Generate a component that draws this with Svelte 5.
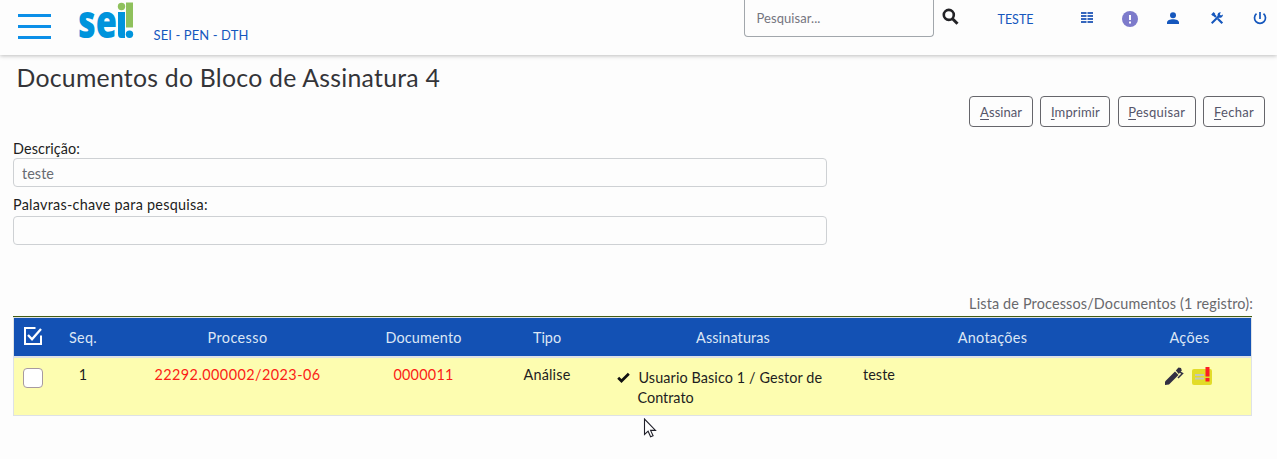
<script>
  const buttons = [
    { key: 'A', rest: 'ssinar', width: 64, spacing: 0.05 },
    { key: 'I', rest: 'mprimir', width: 70, spacing: 0.13 },
    { key: 'P', rest: 'esquisar', width: 78, spacing: 0.28 },
    { key: 'F', rest: 'echar', width: 62, spacing: 0.28 }
  ];
  const columns = [
    { title: 'Seq.', spacing: 0.3 },
    { title: 'Processo', spacing: 0.43 },
    { title: 'Documento', spacing: 0.16 },
    { title: 'Tipo', spacing: 0 },
    { title: 'Assinaturas', spacing: 0.14 },
    { title: 'Anotações', spacing: 0.3 },
    { title: 'Ações', spacing: 0.35 }
  ];
</script>

<header>
  <button class="menu" aria-label="Menu"><span></span><span></span><span></span></button>
  <svg class="logo" width="57" height="55" viewBox="0 0 57 55" role="img" aria-label="sei!">
    <text x="0" y="38" textLength="39" lengthAdjust="spacingAndGlyphs">se</text>
    <path d="M40 12h7v26h-4q-3 0-3-4z" fill="#0094dc" />
    <circle cx="43.5" cy="6.5" r="3.7" fill="#8fc15c" />
    <path d="M48 2.5h7v25h-7z" fill="#8fc15c" />
    <circle cx="51.5" cy="34.3" r="3.7" fill="#0094dc" />
  </svg>
  <span class="unit">SEI - PEN - DTH</span>
  <div class="search">Pesquisar...</div>
  <svg class="lens" width="17" height="17" viewBox="0 0 17 17">
    <circle cx="6.8" cy="6.9" r="5" fill="none" stroke="#222226" stroke-width="2.6" />
    <path d="M10.5 10.8l5 5" stroke="#222226" stroke-width="3" />
  </svg>
  <span class="user">TESTE</span>
  <nav>
    <svg width="20" height="20" viewBox="0 0 20 20">
      <path d="M4 4h5.5v2H4zM10.500 4H16v2h-5.500zM4 7h5.500v2H4zM10.500 7H16v2h-5.500zM4 10h5.500v2H4zM10.500 10H16v2h-5.500zM4 13h5.500v2H4zM10.500 13H16v2h-5.500z" fill="#3566bd" />
    </svg>
    <svg width="20" height="20" viewBox="0 0 20 20">
      <circle cx="10" cy="11" r="8" fill="#7d7bcb" />
      <path d="M9 7h2v5H9zM9 13.500h2v2H9z" fill="#fff" />
    </svg>
    <svg width="20" height="20" viewBox="0 0 20 20">
      <circle cx="10" cy="7.200" r="3" fill="#1557bd" />
      <path d="M4 16v-1.500c0-4.500 12-4.500 12 0V16z" fill="#1557bd" />
    </svg>
    <svg width="20" height="20" viewBox="0 0 20 20">
      <path d="M4.700 15.300L12.500 7.500" stroke="#1557bd" stroke-width="2" />
      <path d="M13.800 4.200l-1 2.200 1.200 1.200 2-1a3 3 0 0 1-4.200 2.900L10.700 8.300a3 3 0 0 1 3.100-4.100z" fill="#1557bd" />
      <path d="M6 6l3 3M10.800 10.800l4.500 4.500" stroke="#1557bd" stroke-width="2.200" />
      <path d="M4.200 6.500l2.400-2.400 1.800 2-2.200 2.200z" fill="#1557bd" />
    </svg>
    <svg width="20" height="20" viewBox="0 0 20 20">
      <path d="M6.500 5.700a5.500 5.500 0 1 0 7 0M10 4v7" fill="none" stroke="#1557bd" stroke-width="1.700" />
    </svg>
  </nav>
</header>

<main>
  <h1>Documentos do Bloco de Assinatura 4</h1>
  <div class="commands">
    {#each buttons as b}
      <button style:width="{b.width}px" style:letter-spacing="{b.spacing}px"><u>{b.key}</u>{b.rest}</button>
    {/each}
  </div>
  <section class="fields">
    <label for="desc" class="desc">Descrição:</label>
    <input id="desc" value="teste" disabled />
    <label for="words" class="words">Palavras-chave para pesquisa:</label>
    <input id="words" disabled />
  </section>
  <p class="caption">Lista de Processos/Documentos (1 registro):</p>
  <div class="table">
    <div class="row head">
      <div class="pick">
        <svg width="20" height="20" viewBox="0 0 20 20" fill="none" stroke="#fff">
          <path d="M12.500 2H2v16h16V9.500" stroke-width="2" />
          <path d="M5 9l4 4.200L18 3" stroke-width="2.300" />
        </svg>
      </div>
      {#each columns as c}
        <div><span style:letter-spacing="{c.spacing}px">{c.title}</span></div>
      {/each}
    </div>
    <div class="row body">
      <div class="pick"><span class="box"></span></div>
      <div>1</div>
      <div class="red process">22292.000002/2023-06</div>
      <div class="red number">0000011</div>
      <div class="kind">Análise</div>
      <div class="signers">
        <svg width="13" height="11" viewBox="0 0 13 11">
          <path d="M1.200 5.700l3.300 3.300L11.800 1.700" fill="none" stroke="#111" stroke-width="2.700" />
        </svg>
        <p><span class="first">Usuario Basico 1 / Gestor de</span><br /><span class="second">Contrato</span></p>
      </div>
      <div class="note">teste</div>
      <div class="actions">
        <svg width="20" height="20" viewBox="0 0 20 20">
          <path d="M1 15.500L11 5.500l3.500 3.500L5 18.500 1 19z" fill="#322f42" />
          <path d="M11.800 4.500L14.500 1.500l2.500.5 .8 2.500-3 3.500z" fill="#322f42" />
          <path d="M16 6.200l2.500 1.300-4.500 4.500" fill="none" stroke="#322f42" stroke-width="1.500" />
        </svg>
        <svg width="22" height="20" viewBox="0 0 22 20">
          <rect x="1" y="3" width="20" height="16" rx="2" fill="#e2dc29" />
          <path d="M4 8h9v2H4zM4 11.500h9v2H4z" fill="#c3c6b8" />
          <path d="M14.500 1h4v9.500h-4zM14.500 12h4v3.500h-4z" fill="#fb1d24" />
        </svg>
      </div>
    </div>
  </div>
</main>

<svg class="cursor" width="14" height="20" viewBox="0 0 14 20">
  <path d="M1.500 1v15.500l3.600-3.300 2.500 5.600 2.500-1.100-2.500-5.300h4.900z" fill="#fff" stroke="#20202a" stroke-width="1.100" />
</svg>

<style>
  :global(body) { background: #fdfdfd; overflow: hidden; }
  :global(#app) { font-family: Lato, 'Open Sans', sans-serif; font-size: 14.4px; line-height: 20px; color: #1e1e22; }
  * { box-sizing: border-box; }
  button, input { font-family: inherit; margin: 0; }
  header { height: 55px; display: flex; align-items: flex-start; background: #fdfdfd; box-shadow: 0 1px 4px rgba(0, 0, 0, .25); }
  .menu { margin: 14px 0 0 18px; width: 33px; height: 25px; padding: 0; border: 0; background: none; display: flex; flex-direction: column; justify-content: space-between; }
  .menu span { height: 3px; background: #0b8fe8; width: 33px; }
  .logo { margin-left: 27px; flex: none; overflow: visible; }
  .logo text { font-family: 'Open Sans', sans-serif; font-weight: 800; font-size: 46px; fill: #0094dc; }
  .unit { margin: 25px 0 0 18.500px; width: 119.500px; font-size: 13px; letter-spacing: .1px; color: #1557bd; }
  .search { margin-left: 471px; width: 190px; height: 37px; border: 1px solid #a2a7ac; border-top: 0; border-radius: 0 0 4px 4px; padding: 8px 0 0 11.500px; font-size: 13px; letter-spacing: .07px; color: #75757f; }
  .lens { margin: 8px 0 0 8px; }
  .user { margin: 10px 0 0 38.500px; width: 43.500px; font-size: 12.500px; letter-spacing: 0; color: #1557bd; }
  nav { display: flex; gap: 23.200px; padding-top: 8px; margin-left: 36px; }
  nav svg { flex: none; }
  main { display: flex; flex-direction: column; padding: 8px 12px 0 13px; }
  h1 { margin: 0 0 0 3.500px; font-size: 24.800px; line-height: 30px; font-weight: 400; letter-spacing: .25px; color: #343438; }
  .commands { display: flex; justify-content: flex-end; gap: 7.300px; margin-top: 3px; }
  .commands button { height: 31px; padding: 1px 0 0; border: 1px solid #66666b; border-radius: 4px; background: #fdfdfd; color: #55556a; font-size: 13px; white-space: nowrap; }
  u { text-underline-offset: 2px; }
  .fields { display: flex; flex-direction: column; width: 814px; margin-top: 12px; }
  .desc { height: 19px; letter-spacing: .1px; }
  .words { letter-spacing: .26px; margin: 8px 0 1px; }
  input { height: 29px; border: 1px solid #ced1d4; border-radius: 4px; background: #fdfdfd; padding: 2px 8px 0; font-size: 14.400px; letter-spacing: .06px; color: #686c72; }
  .caption { align-self: flex-end; margin: 49px 12px 0 0; letter-spacing: .16px; color: #69696d; }
  .table { width: 1239px; margin-top: 2px; border-top: 1px solid #455d13; }
  .row { display: grid; grid-template-columns: 39px 60px 249px 123px 124px 248px 271px 123px; border: 1px solid #dee2e6; text-align: center; }
  .head { height: 41px; background: #1351b4; color: #dce6f5; border-bottom-width: 2px; align-items: center; }
  .head > div { padding-top: 1px; }
  .head .pick { padding: 0; margin-top: -2px; }
  .pick { display: flex; }
  .head svg { margin-left: 9px; }
  .body { height: 58px; background: #fdfdb0; border-top: 0; padding-top: 7px; }
  .box { width: 20px; height: 20px; margin: 3px 0 0 9px; border: 1px solid #a79aa0; border-radius: 4px; background: #fff; }
  .red { color: #fb1d16; }
  .process { letter-spacing: .45px; }
  .number { letter-spacing: .25px; }
  .kind { letter-spacing: .2px; }
  .signers { display: flex; text-align: left; padding-left: 8px; }
  .signers svg { flex: none; margin-top: 7px; }
  .signers p { margin: 3px 0 0 7.500px; }
  .first { letter-spacing: .1px; margin-left: 1px; }
  .note { text-align: left; padding-left: 6px; letter-spacing: .06px; }
  .actions { display: flex; justify-content: center; gap: 7px; padding-top: 1px; margin-left: -2px; }
  .cursor { position: absolute; left: 643px; top: 418px; }
</style>
